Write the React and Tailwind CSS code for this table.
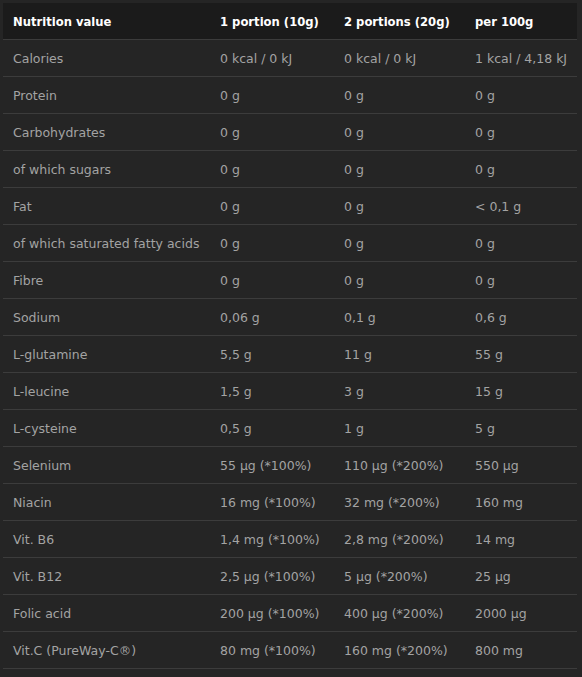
import React from "react";

const rows = [
  ["Calories", "0 kcal / 0 kJ", "0 kcal / 0 kJ", "1 kcal / 4,18 kJ"],
  ["Protein", "0 g", "0 g", "0 g"],
  ["Carbohydrates", "0 g", "0 g", "0 g"],
  ["of which sugars", "0 g", "0 g", "0 g"],
  ["Fat", "0 g", "0 g", "< 0,1 g"],
  ["of which saturated fatty acids", "0 g", "0 g", "0 g"],
  ["Fibre", "0 g", "0 g", "0 g"],
  ["Sodium", "0,06 g", "0,1 g", "0,6 g"],
  ["L-glutamine", "5,5 g", "11 g", "55 g"],
  ["L-leucine", "1,5 g", "3 g", "15 g"],
  ["L-cysteine", "0,5 g", "1 g", "5 g"],
  ["Selenium", "55 µg (*100%)", "110 µg (*200%)", "550 µg"],
  ["Niacin", "16 mg (*100%)", "32 mg (*200%)", "160 mg"],
  ["Vit. B6", "1,4 mg (*100%)", "2,8 mg (*200%)", "14 mg"],
  ["Vit. B12", "2,5 µg (*100%)", "5 µg (*200%)", "25 µg"],
  ["Folic acid", "200 µg (*100%)", "400 µg (*200%)", "2000 µg"],
  ["Vit.C (PureWay-C®)", "80 mg (*100%)", "160 mg (*200%)", "800 mg"],
];

const cols = "grid grid-cols-[207px_124px_131px_112px]";

export default function App() {
  return (
    <div className="w-[582px] h-[677px] bg-[#252525] pt-[3px] pl-[3px]" style={{ fontFamily: '"DejaVu Sans", Verdana, sans-serif' }}>
      <div className="w-[574px]">
        <div className={`${cols} h-[37px] items-center pt-[4px] bg-[#1b1b1b] border-b border-[#3c3c3c] text-white font-bold text-[11.6px]`}>
          <div className="pl-[10px]">Nutrition value</div>
          <div className="pl-[10px]">1 portion (10g)</div>
          <div className="pl-[10px]">2 portions (20g)</div>
          <div className="pl-[10px]">per 100g</div>
        </div>
        {rows.map((r, i) => (
          <div key={i} className={`${cols} h-[37px] items-center pt-[2px] border-b border-[#3c3c3c] text-[#a3a3a3] text-[12.5px]`}>
            {r.map((c, j) => (
              <div key={j} className="pl-[10px] whitespace-nowrap">{c}</div>
            ))}
          </div>
        ))}
      </div>
    </div>
  );
}
